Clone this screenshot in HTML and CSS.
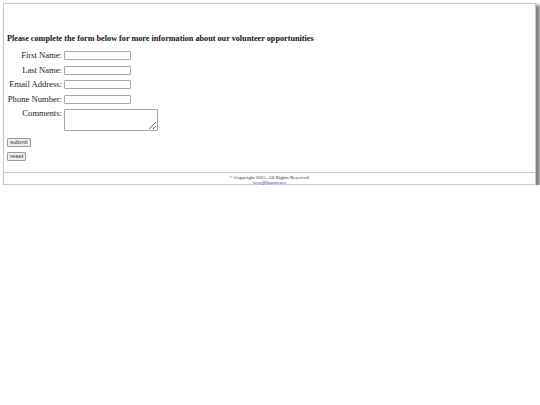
FILE: index.html
```html
<!DOCTYPE html>
<html>
<head>
<meta charset="utf-8">
<link rel="stylesheet" href="styles.css">
</head>
<body>
<div class="page">
  <div class="content">
    <h1 class="title">Please complete the form below for more information about our volunteer opportunities</h1>
    <form class="form">
      <div class="grid">
        <label class="lbl">First Name:</label><input class="field" type="text">
        <label class="lbl">Last Name:</label><input class="field" type="text">
        <label class="lbl">Email Address:</label><input class="field" type="text">
        <label class="lbl">Phone Number:</label><input class="field" type="text">
        <label class="lbl">Comments:</label><textarea class="area"></textarea>
      </div>
      <div class="btnrow"><button class="btn" type="button">submit</button></div>
      <div class="btnrow"><button class="btn" type="button">reset</button></div>
    </form>
  </div>
  <div class="footer">
    <div class="copy">© Copyright 2015. All Rights Reserved.</div>
    <a class="mail" href="#">new@hamot.net</a>
  </div>
</div>
</body>
</html>
```
FILE: styles.css
```css
html, body { margin: 0; padding: 0; background: #fff; }
body { font-family: "Liberation Serif", "Times New Roman", serif; color: #222; }
.page {
  margin: 3px 0 0 3px;
  width: 531px;
  border: 1px solid #c8c8c8;
  box-shadow: 3px 3px 3px 1px #808080;
  background: #fff;
}
.content { padding: 30px 0 0 3px; height: 136px; box-sizing: border-box; }
.title { margin: 0; font-size: 8.2px; font-weight: bold; line-height: 10px; color: #111; }
.form { margin-top: 7px; }
.grid {
  display: grid;
  grid-template-columns: 55px 95px;
  column-gap: 2px;
  row-gap: 5.5px;
  align-items: start;
}
.lbl { font-size: 8.6px; text-align: right; line-height: 9px; color: #222; white-space: nowrap; }
.field {
  width: 67px; height: 9px; box-sizing: border-box; margin: 0; padding: 0;
  border: 1px solid #a8a8a8; border-radius: 1px;
}
.area {
  width: 94px; height: 22px; box-sizing: border-box; margin: 0; padding: 0;
  border: 1px solid #a8a8a8; border-radius: 1px; resize: both;
}
.btnrow { margin-top: 7px; line-height: 0; }
.btnrow + .btnrow { margin-top: 5px; }
.btn {
  font-family: "Liberation Sans", Arial, sans-serif; font-size: 6px;
  height: 9px; padding: 0 2px; margin: 0; line-height: 7px;
  border: 1px solid #9a9a9a; border-radius: 1px; background: #efefef; color: #333;
}
.footer {
  border-top: 1px solid #c8c8c8;
  margin-top: 32px;
  height: 12px;
  text-align: center;
  font-size: 5px;
  line-height: 5px;
  padding-top: 2px;
  box-sizing: border-box;
}
.copy { color: #333; }
.mail { color: #3344cc; }
```
